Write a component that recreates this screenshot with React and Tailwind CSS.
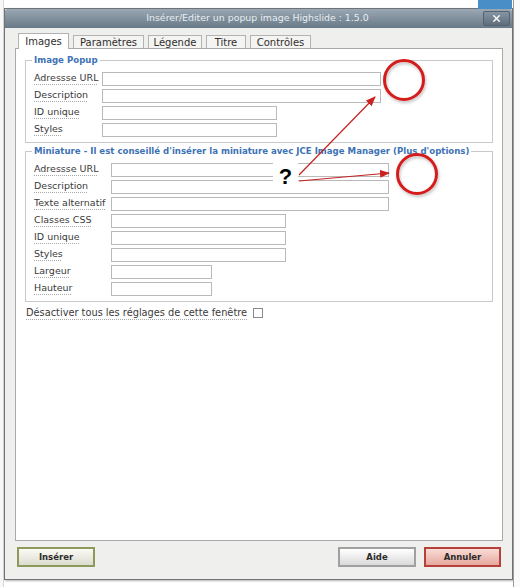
import { X } from 'lucide-react'

const popupRows = [
  { label: 'Adressse URL', width: 'w-[279px]' },
  { label: 'Description', width: 'w-[279px]' },
  { label: 'ID unique', width: 'w-[175px]' },
  { label: 'Styles', width: 'w-[175px]' },
]

const thumbRows = [
  { label: 'Adressse URL', width: 'w-[278px]' },
  { label: 'Description', width: 'w-[278px]' },
  { label: 'Texte alternatif', width: 'w-[278px]' },
  { label: 'Classes CSS', width: 'w-[175px]' },
  { label: 'ID unique', width: 'w-[175px]' },
  { label: 'Styles', width: 'w-[175px]' },
  { label: 'Largeur', width: 'w-[101px]' },
  { label: 'Hauteur', width: 'w-[101px]' },
]

const tabs = [
  { label: 'Images', width: 'w-[51px]', active: true },
  { label: 'Paramètres', width: 'w-[71px]' },
  { label: 'Légende', width: 'w-[54px]' },
  { label: 'Titre', width: 'w-[40px]' },
  { label: 'Contrôles', width: 'w-[61px]' },
]

function FieldRow({ label, width, labelWidth }) {
  return (
    <div className="flex items-center h-[17px]">
      <span className={`${labelWidth} pl-[1px] text-[9.5px] text-[#3a3a3a] underline decoration-dotted decoration-[#a8a8a8] underline-offset-[3px] whitespace-nowrap`}>
        {label}
      </span>
      <div className={`${width} h-[14px] border border-[#b9b9b9] bg-white`} />
    </div>
  )
}

function Fieldset({ legend, rows, labelWidth, className = '' }) {
  return (
    <fieldset className={`w-[468px] border border-[#c9c9c9] px-[7px] pt-[4px] pb-[4px] ${className}`}>
      <legend className="px-[2px] ml-[-1px] text-[8.6px] font-bold text-[#3d72b4] leading-[12px] whitespace-nowrap">
        {legend}
      </legend>
      {rows.map(row => (
        <FieldRow key={row.label} {...row} labelWidth={labelWidth} />
      ))}
    </fieldset>
  )
}

function Annotations() {
  return (
    <svg className="absolute inset-0 pointer-events-none" width="520" height="587" viewBox="0 0 520 587">
      <defs>
        <marker id="head" markerWidth="10" markerHeight="8" refX="9" refY="4" orient="auto" markerUnits="userSpaceOnUse">
          <path d="M0 0 L10 4 L0 8 Z" fill="#cc1f1f" />
        </marker>
        <filter id="soft" x="-30%" y="-30%" width="160%" height="160%">
          <feDropShadow dx="1" dy="2" stdDeviation="1.5" floodColor="#000" floodOpacity="0.25" />
        </filter>
      </defs>
      <circle cx="404" cy="80" r="19.5" fill="none" stroke="#d41c1c" strokeWidth="3" filter="url(#soft)" />
      <circle cx="417" cy="174" r="19.5" fill="none" stroke="#d41c1c" strokeWidth="3" filter="url(#soft)" />
      <line x1="299" y1="175" x2="375" y2="97" stroke="#c42222" strokeWidth="1.2" markerEnd="url(#head)" />
      <line x1="299" y1="181" x2="389" y2="173" stroke="#c42222" strokeWidth="1.2" markerEnd="url(#head)" />
    </svg>
  )
}

export default function App() {
  return (
    <div className="relative w-[520px] h-[587px] overflow-hidden bg-white font-['DejaVu_Sans',sans-serif]">
      <div className="absolute right-[8px] top-0 w-[34px] h-[9px] bg-[#4a8ec8]" />

      <div className="flex h-full">
        <div className="w-[4px] border-r border-[#d8d8d8] bg-[#f7f7f7]" />
        <div className="mt-[8px] w-[509px] h-[572px] border border-[#6f7378] bg-[#efefed] flex flex-col shadow-[1px_1px_2px_rgba(0,0,0,0.3)]">
          <div className="h-[19px] flex items-center bg-gradient-to-b from-[#9aa8b4] to-[#687987] rounded-t-[2px]">
            <div className="flex-1" />
            <span className="text-[9.4px] text-[#e9eef2] whitespace-nowrap">
              Insérer/Editer un popup image Highslide : 1.5.0
            </span>
            <div className="flex-1 flex justify-end pr-[2px]">
              <div className="w-[27px] h-[15px] rounded-[2px] bg-gradient-to-b from-[#8595a3] to-[#5f6f7d] border border-[#56626d] flex items-center justify-center">
                <X className="w-[11px] h-[11px] text-white" strokeWidth={3} />
              </div>
            </div>
          </div>

          <div className="px-[10px] pt-[5px] flex flex-col">
            <div className="flex items-end gap-[4px] pl-[3px] h-[15px]">
              {tabs.map(tab => (
                <div
                  key={tab.label}
                  className={`${tab.width} flex items-center justify-center text-[10px] text-[#2f2f2f] border border-b-0 border-[#b3b3b3] ${
                    tab.active ? 'h-[16px] bg-white -mb-px relative z-10' : 'h-[13px] bg-[#f4f4f2]'
                  }`}
                >
                  {tab.label}
                </div>
              ))}
            </div>

            <div className="w-[488px] h-[493px] bg-white border border-[#a9a9a9] px-[9px] pt-[5px] flex flex-col">
              <Fieldset legend="Image Popup" rows={popupRows} labelWidth="w-[69px]" />
              <Fieldset
                className="mt-[2px]"
                legend="Miniature - Il est conseillé d'insérer la miniature avec JCE Image Manager (Plus d'options)"
                rows={thumbRows}
                labelWidth="w-[78px]"
              />
              <div className="flex items-center gap-[6px] h-[14px] mt-[4px] pl-[1px]">
                <span className="text-[9.8px] text-[#3a3a3a] underline decoration-dotted decoration-[#a8a8a8] underline-offset-[3px]">
                  Désactiver tous les réglages de cette fenêtre
                </span>
                <div className="w-[10px] h-[10px] border border-[#8a8a8a] bg-white" />
              </div>
            </div>

            <div className="flex items-center mt-[6px] pl-[2px] pr-[1px]">
              <button className="w-[78px] h-[20px] border-2 border-[#8e9a5c] bg-gradient-to-b from-[#fbfbf6] to-[#dcdccf] text-[8.5px] font-bold text-[#2b2b2b]" type="button">
                Insérer
              </button>
              <div className="flex-1" />
              <button className="w-[78px] h-[20px] border-2 border-[#a0a0a0] bg-gradient-to-b from-[#ffffff] to-[#dadada] text-[8.5px] font-bold text-[#2b2b2b]" type="button">
                Aide
              </button>
              <button className="w-[77px] h-[20px] ml-[8px] border-2 border-[#b8403a] bg-gradient-to-b from-[#f8dcd6] to-[#e5a89e] text-[8.5px] font-bold text-[#2b2b2b]" type="button">
                Annuler
              </button>
            </div>
          </div>
        </div>
        <div className="flex-1 border-l border-[#9a9a9a] bg-[#fafafa]" />
      </div>

      <Annotations />

      <div className="absolute left-[273px] top-[161px] w-[25px] h-[31px] bg-white flex items-center justify-center">
        <span className="font-['Liberation_Sans',sans-serif] text-[22px] font-bold text-black leading-none">?</span>
      </div>
    </div>
  )
}
